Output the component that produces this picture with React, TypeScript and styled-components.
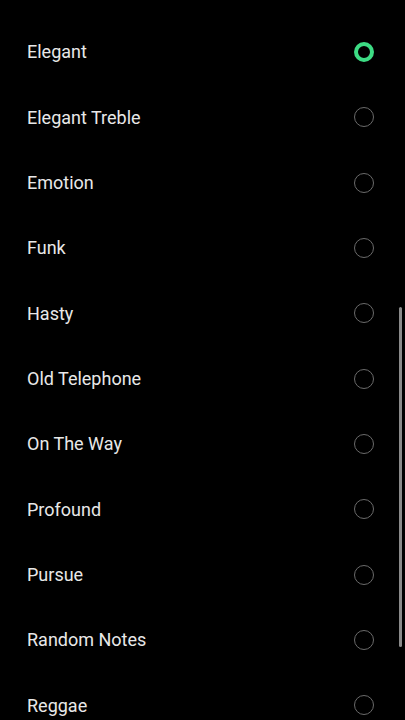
import styled, { createGlobalStyle } from "styled-components";

const GlobalStyle = createGlobalStyle`
  html, body {
    margin: 0;
    padding: 0;
    background: #000;
  }
`;

const Screen = styled.div`
  position: relative;
  width: 405px;
  height: 720px;
  overflow: hidden;
  background: #000;
  font-family: Roboto, "Noto Sans", sans-serif;
`;

const List = styled.ul`
  list-style: none;
  margin: 0;
  padding: 19.33px 0 0;
`;

const Row = styled.li`
  display: flex;
  align-items: center;
  justify-content: space-between;
  height: 65.33px;
  padding: 0 31px 0 27px;
  box-sizing: border-box;
`;

const Label = styled.span`
  color: #e8e8e8;
  font-size: 18px;
`;

const Radio = styled.span<{ $checked?: boolean }>`
  box-sizing: border-box;
  width: 20px;
  height: 20px;
  border-radius: 50%;
  border: ${(p) => (p.$checked ? "4px solid #3ddc84" : "1.5px solid #6b6b6b")};
`;

const Scrollbar = styled.div`
  position: absolute;
  right: 3px;
  top: 307px;
  width: 3px;
  height: 340px;
  border-radius: 2px;
  background: #8a8a8a;
`;

const sounds = [
  "Elegant",
  "Elegant Treble",
  "Emotion",
  "Funk",
  "Hasty",
  "Old Telephone",
  "On The Way",
  "Profound",
  "Pursue",
  "Random Notes",
  "Reggae",
];

export default function App() {
  const selected = "Elegant";

  return (
    <>
      <GlobalStyle />
      <Screen>
        <List>
          {sounds.map((name) => (
            <Row key={name}>
              <Label>{name}</Label>
              <Radio $checked={name === selected} />
            </Row>
          ))}
        </List>
        <Scrollbar />
      </Screen>
    </>
  );
}
